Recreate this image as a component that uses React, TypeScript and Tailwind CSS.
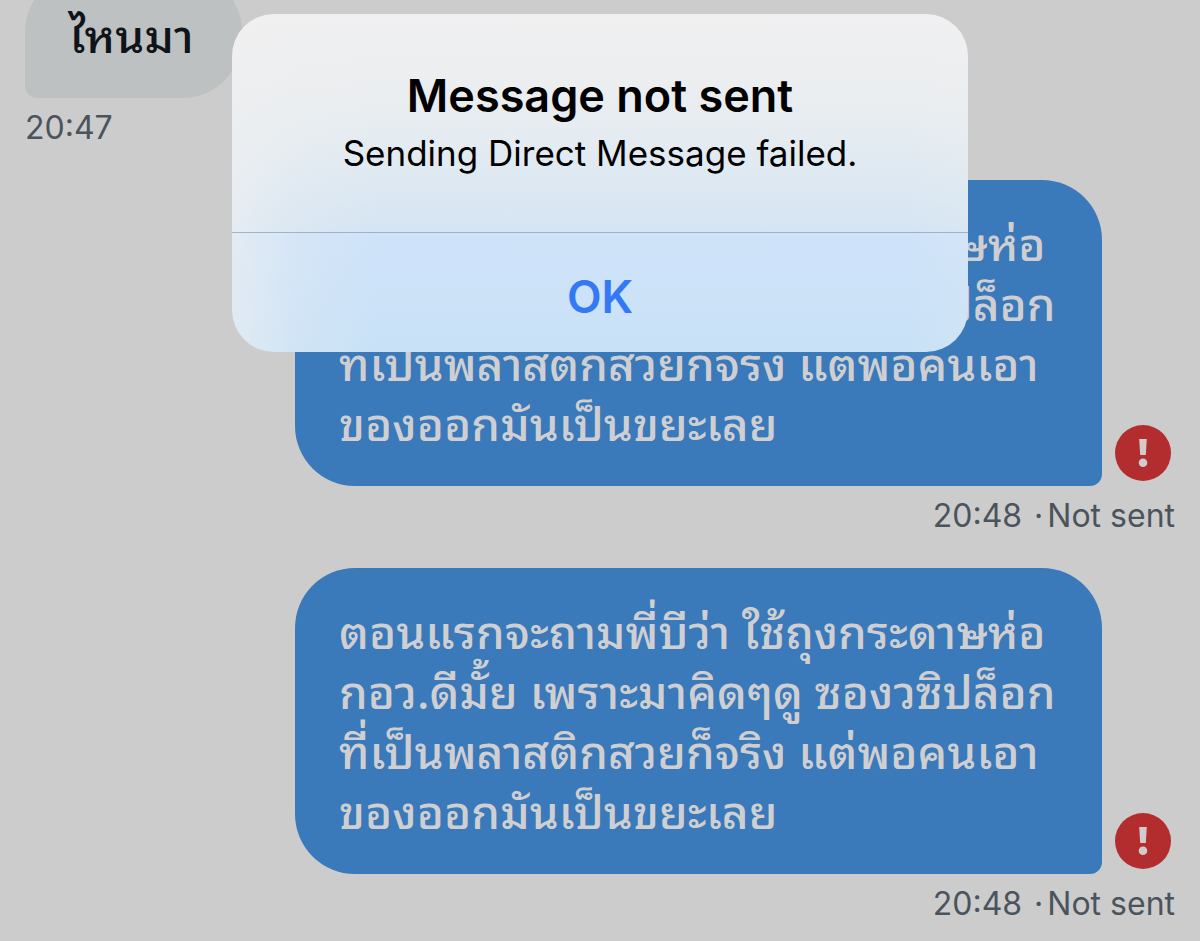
type Message = {
  id: number;
  text: string;
  time: string;
  incoming?: boolean;
};

const messages: Message[] = [
  { id: 1, text: "ไหนมา", time: "20:47", incoming: true },
  {
    id: 2,
    text: "ตอนแรกจะถามพี่บีว่า ใช้ถุงกระดาษห่อ\nกอว.ดีมั้ย เพราะมาคิดๆดู ซองวซิปล็อก\nที่เป็นพลาสติกสวยก็จริง แต่พอคนเอา\nของออกมันเป็นขยะเลย",
    time: "20:48",
  },
  {
    id: 3,
    text: "ตอนแรกจะถามพี่บีว่า ใช้ถุงกระดาษห่อ\nกอว.ดีมั้ย เพราะมาคิดๆดู ซองวซิปล็อก\nที่เป็นพลาสติกสวยก็จริง แต่พอคนเอา\nของออกมันเป็นขยะเลย",
    time: "20:48",
  },
];

function AlertIcon() {
  return (
    <svg viewBox="0 0 56 56" className="size-14" aria-hidden="true">
      <circle cx="28" cy="28" r="28" fill="#b42d2e" />
      <path d="M24.2 14h7.6l-1 16h-5.6z" fill="#d0cccc" />
      <circle cx="28" cy="37.7" r="4.3" fill="#d0cccc" />
    </svg>
  );
}

function IncomingMessage({ message }: { message: Message }) {
  return (
    <li className="flex flex-col items-start">
      <p className="whitespace-pre-line rounded-[60px] rounded-bl-xl bg-[#bdc1c2] pt-[30px] pr-12 pb-9 pl-11 font-['Noto_Sans_Thai_Looped','Loma','Garuda','Waree','Umpush','Laksaman','Noto_Sans',sans-serif] text-[46px] leading-[60px] font-medium text-[#0f1419]">
        {message.text}
      </p>
      <p className="mt-2.5 text-[32px] leading-10 text-[#4b545c]">{message.time}</p>
    </li>
  );
}

function FailedMessage({ message }: { message: Message }) {
  return (
    <li className="flex flex-col items-end">
      <div className="flex w-full items-end justify-end gap-[13px] pr-1">
        <p className="w-full max-w-[807px] whitespace-pre-line rounded-[60px] rounded-br-xl bg-[#3a79ba] pt-[30px] pr-8 pb-9 pl-11 font-['Noto_Sans_Thai_Looped','Loma','Garuda','Waree','Umpush','Laksaman','Noto_Sans',sans-serif] text-[46px] leading-[60px] font-medium text-[#cfcfd1]">
          {message.text}
        </p>
        <button type="button" aria-label="Retry sending" className="mb-[5px] shrink-0 rounded-full">
          <AlertIcon />
        </button>
      </div>
      <p className="mt-2.5 flex text-[32px] leading-10 text-[#4b545c]">
        <span>{message.time}</span>
        <span className="mr-1 ml-3">·</span>
        <span>Not sent</span>
      </p>
    </li>
  );
}

function AlertDialog() {
  return (
    <div className="absolute inset-x-0 top-3.5 flex justify-center">
      <div
        role="alertdialog"
        aria-labelledby="alert-title"
        aria-describedby="alert-text"
        className="w-full max-w-[736px] overflow-hidden rounded-[42px] bg-[linear-gradient(90deg,rgba(240,240,241,0.6)_0%,rgba(240,240,241,0.2)_9%,rgba(240,240,241,0)_20%,rgba(240,240,241,0)_92%,rgba(240,240,241,0.15)_100%),linear-gradient(180deg,#f0f0f1_0%,#eceef0_20%,#e3ebf1_40%,#d5e5f3_64%,#cfe3f9_65%,#c8e1f6_100%)] text-center text-black"
      >
        <div className="px-8 py-[54px]">
          <h1 id="alert-title" className="text-[45px] leading-[56px] font-semibold">
            Message not sent
          </h1>
          <p id="alert-text" className="mt-1 text-[35px] leading-[50px]">
            Sending Direct Message failed.
          </p>
        </div>
        <button
          type="button"
          className="h-[120px] w-full border-t border-[#9db3c6] pt-2 text-[45px] font-semibold text-[#3478f6]"
        >
          OK
        </button>
      </div>
    </div>
  );
}

export default function App() {
  return (
    <main className="relative min-h-screen overflow-hidden bg-[#cccccc] font-['Inter',sans-serif]">
      <ul className="-mt-7 flex flex-col gap-8 px-[25px]">
        {messages.map((message) =>
          message.incoming ? (
            <IncomingMessage key={message.id} message={message} />
          ) : (
            <FailedMessage key={message.id} message={message} />
          ),
        )}
      </ul>
      <AlertDialog />
    </main>
  );
}
